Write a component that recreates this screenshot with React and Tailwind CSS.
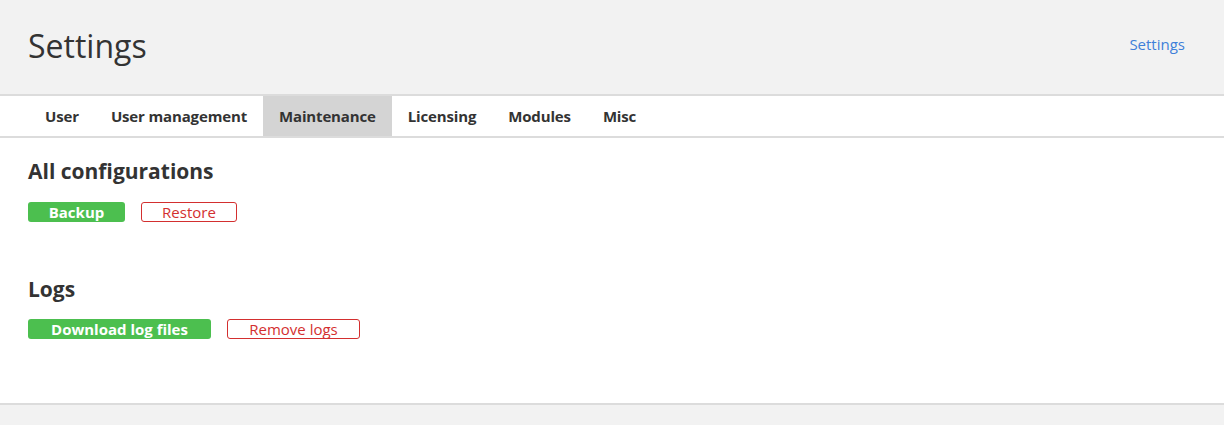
import React from "react";

const tabs = ["User", "User management", "Maintenance", "Licensing", "Modules", "Misc"];

export default function App() {
  return (
    <div className="w-[1224px] h-[425px] bg-[#f2f2f2] text-[#333] flex flex-col" style={{ fontFamily: '"Open Sans", "Noto Sans", sans-serif' }}>
      <header className="h-[94px] flex items-center justify-between pl-[28px] pr-[39px] border-b-2 border-[#dcdcdc] box-content">
        <h1 className="text-[32px] leading-none text-[#333] -mt-[3px]">Settings</h1>
        <a className="text-[15px] text-[#3f7fd9] -mt-[5px]">Settings</a>
      </header>
      <nav className="h-[40px] bg-white flex pl-[29px] border-b-2 border-[#dcdcdc] box-content">
        {tabs.map((t) => (
          <div
            key={t}
            className={
              "px-[16px] flex items-center text-[15px] font-bold tracking-[-0.15px] text-[#333] " +
              (t === "Maintenance" ? "bg-[#d4d4d4]" : "")
            }
          >
            {t}
          </div>
        ))}
      </nav>
      <main className="bg-white h-[265px] border-b-2 border-[#dcdcdc] box-content pl-[28px]">
        <h2 className="text-[21px] font-bold leading-none mt-[23px]">All configurations</h2>
        <div className="flex gap-[16px] mt-[20px]">
          <button className="h-[20px] w-[97px] rounded-[3px] bg-[#4cbf4f] text-white font-bold text-[15px] leading-none">Backup</button>
          <button className="h-[20px] w-[96px] rounded-[3px] border border-[#d32f2f] text-[#d32f2f] text-[15px] leading-none">Restore</button>
        </div>
        <h2 className="text-[21px] font-bold leading-none mt-[57px]">Logs</h2>
        <div className="flex gap-[16px] mt-[19px]">
          <button className="h-[20px] w-[183px] rounded-[3px] bg-[#4cbf4f] text-white font-bold text-[15px] leading-none">Download log files</button>
          <button className="h-[20px] w-[133px] rounded-[3px] border border-[#d32f2f] text-[#d32f2f] text-[15px] leading-none">Remove logs</button>
        </div>
      </main>
      <div className="flex-1" />
    </div>
  );
}
